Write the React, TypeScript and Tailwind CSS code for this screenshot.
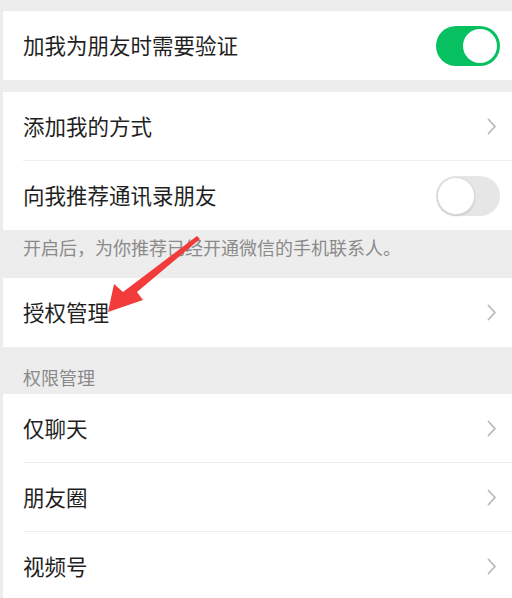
import React from 'react'

const font = { fontFamily: '"Noto Sans CJK SC", "Noto Sans", sans-serif' }

function Chevron() {
  return (
    <svg width="12" height="17" viewBox="0 0 12 17" fill="none">
      <path d="M2.5 1.5 L9 8.5 L2.5 15.5" stroke="#b8b8b8" strokeWidth="1.8" strokeLinecap="round" strokeLinejoin="round" />
    </svg>
  )
}

function Toggle({ on }: { on: boolean }) {
  return on ? (
    <div className="relative w-[64px] h-[40px] rounded-full bg-[#07c160]">
      <div className="absolute right-[3px] top-[3px] w-[34px] h-[34px] rounded-full bg-white" />
    </div>
  ) : (
    <div className="relative w-[64px] h-[40px] rounded-full bg-[#e6e6e6]">
      <div className="absolute left-[1px] top-[1px] w-[38px] h-[38px] rounded-full bg-white border border-[#dcdcdc] shadow-[0_1px_2px_rgba(0,0,0,0.15)]" />
    </div>
  )
}

function Row({ label, right, divider }: { label: string; right: React.ReactNode; divider?: boolean }) {
  return (
    <div className="relative h-[69px] bg-white flex items-center justify-between pl-[20px] pr-[12px]">
      <span className="text-[21.5px] text-[#1f1f1f]">{label}</span>
      {right}
      {divider && <div className="absolute bottom-0 left-[20px] right-0 h-px bg-[#ececec]" />}
    </div>
  )
}

export default function App() {
  return (
    <div className="relative w-[512px] h-[598px] overflow-hidden bg-[#ededed] pt-[11px] pl-[3px]" style={font}>
      <Row label="加我为朋友时需要验证" right={<Toggle on />} />
      <div className="h-[12px]" />
      <Row label="添加我的方式" right={<div className="pr-[2px]"><Chevron /></div>} divider />
      <Row label="向我推荐通讯录朋友" right={<Toggle on={false} />} />
      <div className="h-[48px] pl-[20px] pt-[4px] text-[18px] text-[#8a8a8a]">
        开启后，为你推荐已经开通微信的手机联系人。
      </div>
      <Row label="授权管理" right={<div className="pr-[2px]"><Chevron /></div>} />
      <div className="h-[47px] pl-[20px] pt-[17px] text-[18px] text-[#8a8a8a] leading-[26px]">权限管理</div>
      <Row label="仅聊天" right={<div className="pr-[2px]"><Chevron /></div>} divider />
      <Row label="朋友圈" right={<div className="pr-[2px]"><Chevron /></div>} divider />
      <Row label="视频号" right={<div className="pr-[2px]"><Chevron /></div>} />

      {/* red annotation arrow */}
      <svg className="absolute left-0 top-0 pointer-events-none" width="512" height="598" viewBox="0 0 512 598">
        <path d="M197 236 L200 239 L137 292 L143 300 L108 312 L114 284 L123 292 Z" fill="#f23b3b" />
      </svg>
    </div>
  )
}
